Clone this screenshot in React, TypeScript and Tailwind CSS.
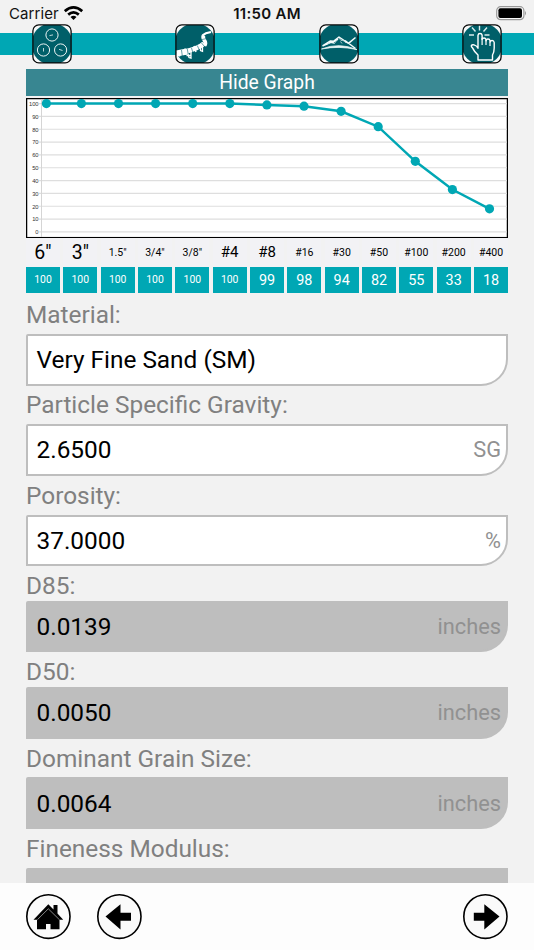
import React from "react";

const sieves = [
  { size: '6"', pass: 100, labelClass: "text-[19.5px]" },
  { size: '3"', pass: 100, labelClass: "text-[19.5px]" },
  { size: '1.5"', pass: 100, labelClass: "text-[10.5px]" },
  { size: '3/4"', pass: 100, labelClass: "text-[10.5px]" },
  { size: '3/8"', pass: 100, labelClass: "text-[10.5px]" },
  { size: "#4", pass: 100, labelClass: "text-[15px]" },
  { size: "#8", pass: 99, labelClass: "text-[15px]" },
  { size: "#16", pass: 98, labelClass: "text-[10.5px]" },
  { size: "#30", pass: 94, labelClass: "text-[10.5px]" },
  { size: "#50", pass: 82, labelClass: "text-[10.5px]" },
  { size: "#100", pass: 55, labelClass: "text-[10.5px]" },
  { size: "#200", pass: 33, labelClass: "text-[10.5px]" },
  { size: "#400", pass: 18, labelClass: "text-[10.5px]" },
];

const ticks = [100, 90, 80, 70, 60, 50, 40, 30, 20, 10, 0];
const yOf = (v: number) => 133.9 - v * 1.283;
const xOf = (i: number) => (i === 0 ? 20.4 : 55.4 + (i - 1) * 37.1);

function StatusBar() {
  return (
    <div className="flex h-6 items-start justify-between pl-[9px] pr-[7px] pt-1 font-['Inter',sans-serif] text-[#111]">
      <div className="flex w-[180px] items-start gap-[5px]">
        <span className="text-[15px] leading-5 tracking-[0.1px]">Carrier</span>
        <svg className="mt-[2px]" width="19" height="14" viewBox="0 0 19 14" fill="none" stroke="#000" strokeWidth="2.7">
          <path d="M0.8 5.1Q9.5 -2.2 18.2 5.1" />
          <path d="M4.2 8.6Q9.5 4.1 14.8 8.6" />
          <path d="M6.5 11Q9.5 8.6 12.5 11L9.5 14Z" fill="#000" stroke="none" />
        </svg>
      </div>
      <span className="text-[15px] font-semibold leading-5 tracking-[0.3px]">11:50 AM</span>
      <div className="flex w-[182px] justify-end pt-[2px]">
        <svg width="31" height="15" viewBox="0 0 31 15">
          <rect x="0.7" y="0.7" width="27.2" height="13" rx="4" fill="#fafafa" stroke="#999" strokeWidth="1.2" />
          <rect x="2.4" y="2.3" width="23.6" height="9.8" rx="2" fill="#000" />
          <path d="M29 5Q31 7.2 29 9.5Z" fill="#999" />
        </svg>
      </div>
    </div>
  );
}

function Tile({ children }: { children: React.ReactNode }) {
  return (
    <svg width="40" height="40" viewBox="0 0 40 40" fill="none">
      <rect x="1" y="1" width="38" height="38" rx="6" fill="#f6f9f9" />
      <path d="M11.5 1H28.5Q36 4.5 39 12V28Q36 35.5 28.5 39H11.5Q4 35.5 1 28V12Q4 4.5 11.5 1Z" fill="#005f69" />
      {children}
      <rect x="0.9" y="0.9" width="38.2" height="38" rx="6" stroke="#080808" strokeWidth="1.3" />
    </svg>
  );
}

function GaugesIcon() {
  return (
    <Tile>
      <g stroke="#edf5f5" strokeWidth="1">
        <circle cx="20" cy="11" r="6.1" />
        <circle cx="11.5" cy="26" r="6.1" />
        <circle cx="28.6" cy="26" r="6.1" />
        <path d="M17.5 11.6l3.5-.7M11.5 24v3.5M27 25.3l3.5 1.2" strokeWidth="0.8" />
      </g>
    </Tile>
  );
}

function PipelineIcon() {
  return (
    <Tile>
      <path d="M1.5 29.5L12 27.5" stroke="#fff" strokeWidth="6" />
      <path d="M11 27.5C18 25.5 24 24 29 19.5" stroke="#fff" strokeWidth="5" />
      <path d="M29.5 21.5C33 17 26.5 16 28.5 11.5" stroke="#fff" strokeWidth="3.8" />
      <path d="M27.5 11.5L31 9.2L36 8" stroke="#fff" strokeWidth="2.2" />
      <path d="M4.5 26v6.5M10 24.5l1 6.5M19 22l2 6" stroke="#fff" strokeWidth="1.4" />
      <path d="M12.5 28l1.5 5.5 2 .6V26M25.5 22v4.5l2 .8V20M11.5 31.5h5" stroke="#fff" strokeWidth="1.3" />
      <path d="M6.5 26l.8 6M12.3 25l.9 5M16.5 24l1.5 5M22.3 21.5l2 4.5M26.5 19l3 3.5M27 15.5l4-.8" stroke="#005f69" strokeWidth="0.6" />
    </Tile>
  );
}

function MountainIcon() {
  return (
    <Tile>
      <path d="M2.5 25Q20 18 38 25.6Q20 21.5 2.5 25Z" fill="#e9f4f4" stroke="#e9f4f4" strokeWidth="0.8" />
      <path d="M3.5 22L11.5 17L14.5 17.3L20 13L27 17.8L29.5 19.3L36.5 13.5M26 16.5L36.5 24.5M5 21.3l7-3 3 .7M15 17.5l4-2.5" stroke="#f4fafa" strokeWidth="1.5" strokeLinejoin="round" />
      <path d="M20 14l2 2.5 2-.2 3 2.5M18 16l-3 4M10 18.5l-1.5 2M21.5 17.5l1.5 2" stroke="#b9d6d8" strokeWidth="0.9" />
    </Tile>
  );
}

function TapIcon() {
  return (
    <Tile>
      <path d="M16 31v5h14.5v-5q1.7-3 1.7-7v-5.5q-.3-2-2.1-2t-2 1.5v-1.2q-.4-1.8-2.1-1.8t-2 1.8v-1.2q-.5-1.6-2-1.6t-1.9 1.4V11.2q-.3-1.7-2.1-1.7t-2 1.8v13q-1-2.6-4-3.4-2.7-.4-2.7 1.2 0 1 1.2 1.8 1.7 3.8 5.5 7.1Z" stroke="#fff" strokeWidth="1.4" strokeLinejoin="round" />
      <path d="M20.1 14v7M24 16v5M28 17.5V22" stroke="#fff" strokeWidth="1.2" />
      <path d="M17.5 1.5v5M10 3.5l3.5 4M25 3.5l-3.5 4M7 11h5M22.5 11h5" stroke="#d8eced" strokeWidth="1.4" />
    </Tile>
  );
}

function Graph() {
  const points = sieves.map((s, i) => `${xOf(i)},${yOf(s.pass)}`).join(" ");
  return (
    <svg className="mt-[2px] block" width="482" height="140.5" viewBox="0 0 482 140.5">
      <rect x="0.6" y="0.6" width="480.8" height="139" fill="#fff" stroke="#000" strokeWidth="1.3" />
      {ticks.map((t) => (
        <g key={t}>
          <path d={`M13 ${yOf(t)}H481`} stroke="#dedede" strokeWidth="1.2" />
          <text x="12.6" y={yOf(t) + 2.3} textAnchor="end" fontSize="5.8" fill="#333" fontFamily="Liberation Sans, sans-serif">
            {t}
          </text>
        </g>
      ))}
      <path d="M15.5 1.5V139" stroke="#d5d5d5" />
      <polyline points={points} fill="none" stroke="#00a7b4" strokeWidth="2.5" />
      {sieves.map((s, i) => (
        <circle key={s.size} cx={xOf(i)} cy={yOf(s.pass)} r="4.6" fill="#00a7b4" />
      ))}
    </svg>
  );
}

function SieveTable() {
  return (
    <div className="grid grid-cols-13 gap-x-[3.4px]">
      {sieves.map((s) => (
        <div key={s.size} className="flex min-w-0 flex-col text-center">
          <div className={`flex h-[29px] items-center justify-center bg-[#f2f2f5] whitespace-nowrap text-black ${s.labelClass}`}>
            {s.size}
          </div>
          <div className={`flex h-[26px] items-center justify-center bg-[#00a7b4] text-white ${s.pass === 100 ? "text-[10.4px]" : "pt-px text-[14.4px]"}`}>
            {s.pass}
          </div>
        </div>
      ))}
    </div>
  );
}

type FieldProps = { label: string; value: string; unit?: string; readOnly?: boolean; labelClass: string };

function Field({ label, value, unit, readOnly, labelClass }: FieldProps) {
  return (
    <div>
      <div className={`${labelClass} text-[24.4px] text-[#808080]`}>{label}</div>
      <div
        className={`flex h-[51.5px] items-center justify-between rounded-tl-[2px] rounded-br-[27px] border-[2.5px] border-[#bebebe] pl-[8.5px] pr-[5px] pt-[1.5px] ${
          readOnly ? "bg-[#bebebe]" : "bg-white"
        }`}
      >
        <span className="text-[24.4px] text-black">{value}</span>
        <span className="text-[21.8px] text-[#919191]">{unit}</span>
      </div>
    </div>
  );
}

function RoundButton({ children, label }: { children: React.ReactNode; label: string }) {
  return (
    <button aria-label={label} className="block">
      <svg width="45" height="46" viewBox="0 0 45 46">
        <ellipse cx="22.4" cy="22.6" rx="21.6" ry="21.8" fill="#fafafa" stroke="#000" strokeWidth="1.6" />
        {children}
      </svg>
    </button>
  );
}

export default function App() {
  return (
    <div className="flex h-[950px] w-[534px] flex-col overflow-hidden bg-[#f2f2f2] font-['Roboto',sans-serif]">
      <StatusBar />
      <header className="relative h-[45px] shrink-0">
        <div className="absolute inset-x-0 top-[8.5px] h-[22.5px] bg-[#00a7b4]" />
        <nav className="relative flex justify-between px-8">
          <GaugesIcon />
          <PipelineIcon />
          <MountainIcon />
          <TapIcon />
        </nav>
      </header>
      <main className="min-h-0 flex-1 overflow-hidden px-[26px]">
        <button className="block h-[26.5px] w-full bg-[#388691] text-[19.3px] leading-[28px] text-white">Hide Graph</button>
        <Graph />
        <SieveTable />
        <Field label="Material:" value="Very Fine Sand (SM)" labelClass="h-[41px] leading-[44px]" />
        <Field label="Particle Specific Gravity:" value="2.6500" unit="SG" labelClass="h-[38.8px] leading-[38px]" />
        <Field label="Porosity:" value="37.0000" unit="%" labelClass="h-[38.8px] leading-[39px]" />
        <Field label="D85:" value="0.0139" unit="inches" readOnly labelClass="h-[34.8px] leading-[40px]" />
        <Field label="D50:" value="0.0050" unit="inches" readOnly labelClass="h-[34.8px] leading-[40px]" />
        <Field label="Dominant Grain Size:" value="0.0064" unit="inches" readOnly labelClass="h-[38.8px] leading-[40px]" />
        <Field label="Fineness Modulus:" value="" readOnly labelClass="h-[38.8px] leading-[40px]" />
      </main>
      <footer className="flex h-[67px] shrink-0 items-center gap-[25.5px] bg-[#fdfdfd] px-[26px]">
        <RoundButton label="Home">
          <path d="M11 23V35.3H20V30H24.5V35.3H33.5V23L22.3 13.5Z" fill="#000" />
          <path d="M7.5 25.7L22.3 10.3L27.5 15.4V11H31.5V19.4L37.2 25.7H33.5L22.3 14.2L11.2 25.7Z" fill="#000" />
          <path d="M11.4 25.7L22.3 14.8L33.4 25.7" fill="none" stroke="#ddd" strokeWidth="0.6" />
        </RoundButton>
        <RoundButton label="Back">
          <path d="M8.5 22.6L23.5 10.2V18.8H34V26.8H23.5V35.6Z" fill="#000" />
        </RoundButton>
        <div className="ml-auto">
          <RoundButton label="Next">
            <path d="M36.5 22.6L21.3 10.2V18.8H10.8V26.8H21.3V35.6Z" fill="#000" />
          </RoundButton>
        </div>
      </footer>
    </div>
  );
}
